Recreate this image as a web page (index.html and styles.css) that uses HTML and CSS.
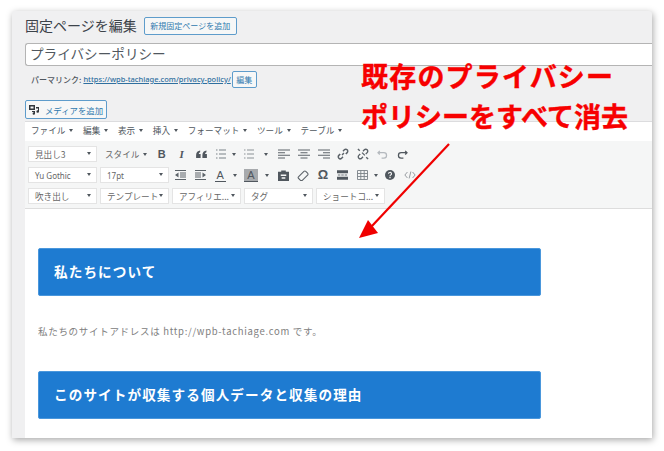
FILE: index.html
```html
<!DOCTYPE html>
<html lang="ja">
<head>
    <meta charset="UTF-8">
    <title>固定ページを編集</title>
    <link rel="stylesheet" href="styles.css">
</head>
<body>
    <div class="window">
        <!-- Page heading -->
        <div class="page-head">
            <h1>固定ページを編集</h1>
            <a class="btn btn-new">新規固定ページを追加</a>
        </div>
        <div class="title-input">プライバシーポリシー</div>
        <div class="permalink">
            <b>パーマリンク:</b>
            <a href="#">https://wpb-tachiage.com/privacy-policy/</a>
            <span class="btn btn-edit">編集</span>
        </div>
        <a class="btn btn-media">
            <svg width="11" height="11" viewBox="0 0 11 11"><path d="M0 1h6v5H0z M1.500 2.500v2h3v-2z" fill="#32373c" fill-rule="evenodd"/><path d="M7 3h3v4.500a1.300 1.300 0 1 1-1-1.200V4.500H7z M3 7h3v2.500a1.200 1.200 0 1 1-1-1.100V8H3z" fill="#32373c"/></svg>
            メディアを追加
        </a>

        <!-- Editor -->
        <div class="editor">
            <div class="menu">
                <span class="menu-item">ファイル</span>
                <span class="menu-item">編集</span>
                <span class="menu-item">表示</span>
                <span class="menu-item">挿入</span>
                <span class="menu-item">フォーマット</span>
                <span class="menu-item">ツール</span>
                <span class="menu-item">テーブル</span>
            </div>
            <div class="toolbar">
                <div class="row">
                    <span class="select">見出し3</span>
                    <span class="style-menu">スタイル</span>
                    <span class="tool"><b class="bold">B</b></span>
                    <span class="tool"><i class="italic">I</i></span>
                    <span class="tool"><svg width="11" height="9" viewBox="0 0 12 10"><path d="M0 5.500C0 2.500 2 .8 4.500 .5v2C3.500 2.800 3 3.500 3 4.500h2V9H0z M7 5.500C7 2.500 9 .8 11.500 .5v2c-1 .3-1.500 1-1.500 2h2V9H7z" fill="#50575e"/></svg></span>
                    <span class="tool"><svg width="10" height="10" viewBox="0 0 10 10"><path d="M0 1h1.500M3 1h7M0 5h1.500M3 5h7M0 9h1.500M3 9h7" stroke="#7b8288" stroke-width="1.100"/></svg></span>
                    <span class="caret"></span>
                    <span class="tool"><svg width="10" height="10" viewBox="0 0 10 10"><path d="M0 1h1.500M3 1h7M0 5h1.500M3 5h7M0 9h1.500M3 9h7" stroke="#8c9196" stroke-width="1.100"/></svg></span>
                    <span class="caret caret-xl"></span>
                    <span class="tool"><svg width="12" height="10" viewBox="0 0 12 10"><path d="M0 1h12M0 3.700h7M0 6.300h12M0 9h7" stroke="#5c6369" stroke-width="1.100"/></svg></span>
                    <span class="tool"><svg width="12" height="10" viewBox="0 0 12 10"><path d="M0 1h12M2.500 3.700h7M0 6.300h12M2.500 9h7" stroke="#5c6369" stroke-width="1.100"/></svg></span>
                    <span class="tool"><svg width="12" height="10" viewBox="0 0 12 10"><path d="M0 1h12M5 3.700h7M0 6.300h12M5 9h7" stroke="#5c6369" stroke-width="1.100"/></svg></span>
                    <span class="tool"><svg width="12" height="12" viewBox="0 0 13 13"><path d="M5.500 7.500l2-2M6.500 3.500l1.500-1.500a2 2 0 0 1 3 3L9.500 6.500M6.500 9.500L5 11a2 2 0 0 1-3-3l1.500-1.500" fill="none" stroke="#5c6369" stroke-width="1.600"/></svg></span>
                    <span class="tool"><svg width="12" height="12" viewBox="0 0 13 13"><path d="M6.500 3.500l1.500-1.500a2 2 0 0 1 3 3L9.500 6.500M6.500 9.500L5 11a2 2 0 0 1-3-3l1.500-1.500M1 1l2 2M10 10l2 2M5.500 5l3 3" fill="none" stroke="#5c6369" stroke-width="1.500"/></svg></span>
                    <span class="tool"><svg width="11" height="9" viewBox="0 0 12 10"><path d="M3 1L1 3l2 2M1 3h6.500a3 3 0 0 1 0 6H5" fill="none" stroke="#b4b9be" stroke-width="1.400"/></svg></span>
                    <span class="tool"><svg width="11" height="9" viewBox="0 0 12 10"><path d="M9 1l2 2-2 2M11 3H4.500a3 3 0 0 0 0 6H7" fill="none" stroke="#50575e" stroke-width="1.400"/></svg></span>
                </div>
                <div class="row">
                    <span class="select font-latin">Yu Gothic</span>
                    <span class="select font-latin">17pt</span>
                    <span class="tool first"><svg width="11" height="10" viewBox="0 0 11 10"><path d="M0 .5h11M5 3h6M5 5h6M5 7h6M0 9.500h11" stroke="#5c6369"/><path d="M3.500 2.500v5L0 5z" fill="#5c6369"/></svg></span>
                    <span class="tool"><svg width="11" height="10" viewBox="0 0 11 10"><path d="M0 .5h11M0 3h6M0 5h6M0 7h6M0 9.500h11" stroke="#5c6369"/><path d="M7.500 2.500v5L11 5z" fill="#5c6369"/></svg></span>
                    <span class="tool"><span class="letter underline">A</span></span>
                    <span class="caret caret-md"></span>
                    <span class="tool"><span class="letter shaded">A</span></span>
                    <span class="caret caret-lg"></span>
                    <span class="tool"><svg width="11" height="11" viewBox="0 0 12 12"><path d="M0 2h3.500V.5h5V2H12v10H0z" fill="#50575e"/><path d="M3 5h6v1.500H3zM4 8h4v1.500H4z" fill="#f5f6f6"/></svg></span>
                    <span class="tool"><svg width="12" height="11" viewBox="0 0 13 12"><path d="M1.500 7.500L7.500 1.500a1.500 1.500 0 0 1 2 0l2 2a1.500 1.500 0 0 1 0 2l-6 6h-1.500l-2.500-2.500a1 1 0 0 1 0-1.500z" fill="none" stroke="#5c6369" stroke-width="1.200"/></svg></span>
                    <span class="tool"><span class="letter omega">Ω</span></span>
                    <span class="tool"><svg width="11" height="10" viewBox="0 0 13 11"><path d="M0 0h13v3.500H0zM0 7.500h13V11H0z" fill="#50575e"/><path d="M1 5.500h3M5 5.500h3M9 5.500h3" stroke="#50575e"/></svg></span>
                    <span class="tool"><svg width="11" height="10" viewBox="0 0 11 10"><path d="M.5 .5h10v9H.5zM.5 3.500h10M.5 6.500h10M3.800 .5v9M7.200 .5v9" fill="none" stroke="#7b8288" stroke-width=".9"/></svg></span>
                    <span class="caret"></span>
                    <span class="tool"><svg width="10" height="10" viewBox="0 0 11 11"><circle cx="5.500" cy="5.500" r="5.500" fill="#50575e"/><path d="M3.800 4.200a1.700 1.500 0 1 1 2.500 1.300c-.6.300-.8.600-.8 1.200" fill="none" stroke="#f5f6f6" stroke-width="1.200"/><path d="M4.800 7.500h1.400V9H4.800z" fill="#f5f6f6"/></svg></span>
                    <span class="tool"><svg width="12" height="8" viewBox="0 0 14 9"><path d="M4 1L1 4.500 4 8M10 1l3 3.500L10 8M8 .5L6 8.500" fill="none" stroke="#7b8288" stroke-width=".9"/></svg></span>
                </div>
                <div class="row">
                    <span class="select">吹き出し</span>
                    <span class="select">テンプレート</span>
                    <span class="select">アフィリエ...</span>
                    <span class="select">タグ</span>
                    <span class="select">ショートコ...</span>
                </div>
            </div>
            <div class="content">
                <h2>私たちについて</h2>
                <p>私たちのサイトアドレスは http://wpb-tachiage.com です。</p>
                <h2>このサイトが収集する個人データと収集の理由</h2>
            </div>
        </div>
    </div>

    <!-- Annotation over the screenshot -->
    <div class="note"><span class="note-first">既存のプライバシー</span><br>ポリシーをすべて消去</div>
    <svg class="arrow" width="100" height="100" viewBox="0 0 100 100">
        <path d="M90 3L13 85" stroke="#f00000" stroke-width="2.200" fill="none"/>
        <path d="M0 97L9 79 19 92z" fill="#f00000"/>
    </svg>
</body>
</html>
```

FILE: styles.css
```css
* {
    margin: 0;
    padding: 0;
    box-sizing: border-box;
}

body {
    font-family: "Noto Sans CJK JP", "Noto Sans", sans-serif;
    background: #ffffff;
    color: #3c434a;
    width: 664px;
    height: 451px;
    overflow: hidden;
    position: relative;
}

.window {
    margin: 11px 12px 0;
    width: 640px;
    height: 427px;
    padding-left: 13px;
    background: #f0f0f1;
    border-radius: 3px 3px 0 0;
    box-shadow: 1px 2px 7px rgba(0, 0, 0, 0.35);
    overflow: hidden;
}

/* Page heading */
.page-head {
    display: flex;
    align-items: center;
    gap: 7px;
    height: 32px;
    padding-bottom: 3px;
}

.page-head h1 {
    font-size: 14px;
    font-weight: 400;
    line-height: 17px;
    color: #3c434a;
}

.btn {
    display: flex;
    align-items: center;
    justify-content: center;
    border: 1px solid #5e9ccb;
    border-radius: 2px;
    background: #f6f7f7;
    color: #2f79ae;
    white-space: nowrap;
}

.btn-new {
    width: 93px;
    height: 18px;
    font-size: 8px;
}

.title-input {
    height: 23px;
    background: #ffffff;
    border: 1px solid #b4b4b4;
    border-right: 0;
    border-radius: 3px 0 0 3px;
    padding-left: 4px;
    font-size: 13.600px;
    line-height: 18px;
    color: #50575e;
}

.permalink {
    display: flex;
    align-items: center;
    height: 17px;
    margin-top: 5px;
    padding: 0 0 1px 6px;
    font-size: 8px;
    color: #50575e;
}

.permalink b {
    font-weight: 500;
    margin-right: 2px;
}

.permalink a {
    color: #2f6f9f;
    text-decoration: underline;
    font-family: "Noto Sans", sans-serif;
    font-size: 7.500px;
    font-weight: 500;
    margin-right: 1px;
}

.btn-edit {
    width: 25px;
    height: 17px;
    font-size: 8px;
}

.btn-media {
    gap: 5px;
    width: 82px;
    height: 19px;
    margin-top: 12px;
    font-size: 8.400px;
}

/* Editor */
.editor {
    margin-top: 2px;
    background: #ffffff;
    border-top: 1px solid #dcdcde;
    height: 400px;
}

.menu {
    display: flex;
    align-items: center;
    height: 19px;
    padding: 0 0 3px 6px;
    background: #ffffff;
}

.menu-item {
    display: flex;
    align-items: center;
    margin-right: 9.700px;
    font-size: 8.600px;
    color: #50575e;
}

.menu-item::after,
.style-menu::after,
.caret::after {
    content: "";
    display: block;
    border-left: 2.500px solid transparent;
    border-right: 2.500px solid transparent;
    border-top: 3.500px solid #50575e;
}

.menu-item::after {
    margin-left: 4px;
}

.toolbar {
    height: 68px;
    padding: 5px 0 0 3px;
    background: #f5f6f6;
    border-bottom: 1px solid #dddddd;
}

.row {
    display: flex;
    align-items: center;
    height: 16px;
    margin-bottom: 5px;
}

.select {
    position: relative;
    display: flex;
    align-items: center;
    width: 69px;
    height: 16px;
    margin-right: 3px;
    padding-left: 6px;
    background: #ffffff;
    border: 1px solid #e4e4e4;
    font-size: 8.600px;
    color: #666666;
    white-space: nowrap;
}

.select::after {
    content: "";
    position: absolute;
    right: 5px;
    top: 5px;
    border-left: 2.500px solid transparent;
    border-right: 2.500px solid transparent;
    border-top: 3.500px solid #50575e;
}

.font-latin {
    font-family: "Noto Sans", sans-serif;
    font-size: 8px;
}

.style-menu {
    display: flex;
    align-items: center;
    width: 47px;
    margin-left: 5px;
    font-size: 8.600px;
    color: #666666;
}

.style-menu::after {
    margin-left: 4px;
}

.tool {
    display: flex;
    align-items: center;
    justify-content: center;
    width: 19.700px;
    height: 16px;
    flex: none;
}

.tool.first {
    margin-left: -1px;
}

.caret {
    display: flex;
    align-items: center;
    justify-content: center;
    width: 9px;
    margin-left: -1px;
    flex: none;
}

.caret-md {
    width: 12px;
}

.caret-lg {
    width: 14px;
}

.caret-xl {
    width: 17px;
}

.bold {
    font: 700 11px "Liberation Sans", sans-serif;
    color: #50575e;
}

.italic {
    font: italic 700 11px "Liberation Serif", serif;
    color: #50575e;
}

.letter {
    font: 400 11px/12px "Liberation Sans", sans-serif;
    color: #50575e;
}

.underline {
    border-bottom: 1px solid #50575e;
    padding: 0 2px;
}

.shaded {
    background: #a7aaad;
    padding: 0 3px;
    border-bottom: 1px solid #50575e;
}

.omega {
    font-size: 13px;
    font-weight: 700;
}

/* Post content */
.content {
    padding: 39px 0 0 13px;
}

.content h2 {
    display: flex;
    align-items: center;
    width: 503px;
    height: 48px;
    padding: 0 0 3px 15px;
    background: #1e7bd1;
    border: 1px solid #4a97dc;
    border-radius: 2px;
    font-size: 13.600px;
    font-weight: 700;
    letter-spacing: 1.100px;
    color: #ffffff;
}

.content p {
    height: 75px;
    padding-top: 26px;
    font-size: 9.500px;
    line-height: 18px;
    letter-spacing: 0.700px;
    color: #808080;
}

/* Annotation */
.note {
    position: absolute;
    left: 361px;
    top: 56px;
    font-size: 27px;
    font-weight: 700;
    line-height: 40px;
    color: #f70000;
    -webkit-text-stroke: 0.400px #f70000;
    white-space: nowrap;
}

.note-first {
    letter-spacing: 1.200px;
}

.arrow {
    position: absolute;
    left: 359px;
    top: 141px;
}
```
